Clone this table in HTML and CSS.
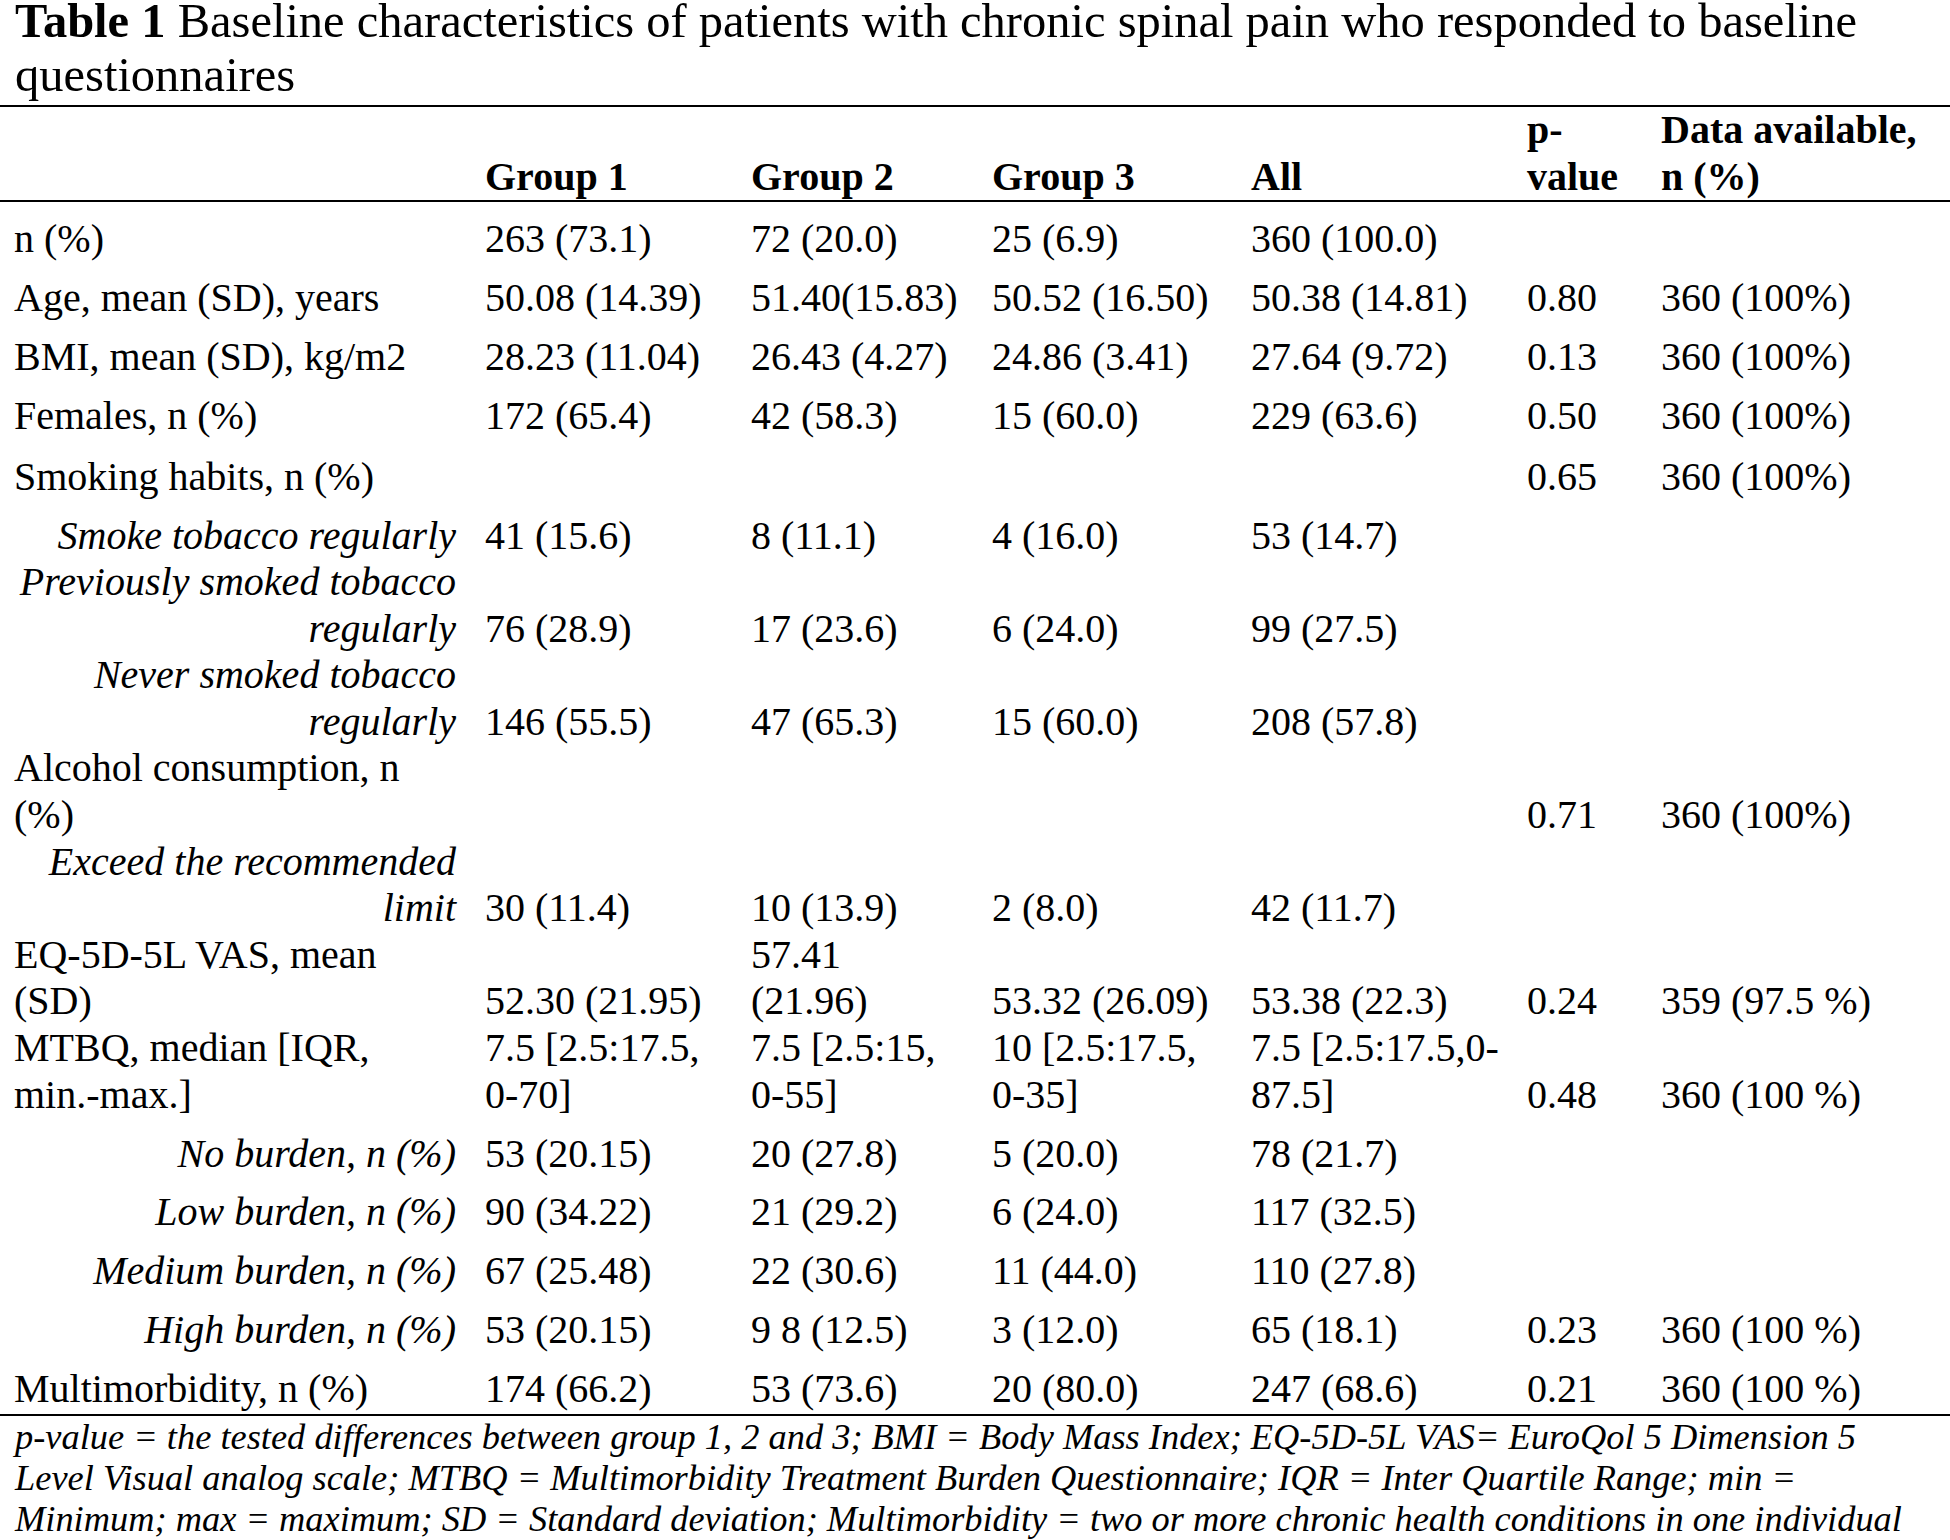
FILE: index.html
```html
<!DOCTYPE html>
<html lang="en">
<head>
<meta charset="utf-8">
<title>Table 1 Baseline characteristics</title>
<link rel="stylesheet" href="styles.css">
</head>
<body>
<div class="title"><b>Table 1</b> Baseline characteristics of patients with chronic spinal pain who responded to baseline questionnaires</div>
<table class="data">
  <colgroup>
    <col class="c-label"><col class="c-g1"><col class="c-g2"><col class="c-g3"><col class="c-all"><col class="c-p"><col class="c-avail">
  </colgroup>
  <thead>
    <tr><th></th><th>Group 1</th><th>Group 2</th><th>Group 3</th><th>All</th><th>p-<br>value</th><th>Data available,<br>n (%)</th></tr>
  </thead>
  <tbody>
    <tr class="first"><td>n (%)</td><td>263 (73.1)</td><td>72 (20.0)</td><td>25 (6.9)</td><td>360 (100.0)</td><td></td><td></td></tr>
    <tr class="pad"><td>Age, mean (SD), years</td><td>50.08 (14.39)</td><td>51.40(15.83)</td><td>50.52 (16.50)</td><td>50.38 (14.81)</td><td>0.80</td><td>360 (100%)</td></tr>
    <tr class="pad"><td>BMI, mean (SD), kg/m2</td><td>28.23 (11.04)</td><td>26.43 (4.27)</td><td>24.86 (3.41)</td><td>27.64 (9.72)</td><td>0.13</td><td>360 (100%)</td></tr>
    <tr class="pad"><td>Females, n (%)</td><td>172 (65.4)</td><td>42 (58.3)</td><td>15 (60.0)</td><td>229 (63.6)</td><td>0.50</td><td>360 (100%)</td></tr>
    <tr class="pad-wide"><td>Smoking habits, n (%)</td><td></td><td></td><td></td><td></td><td>0.65</td><td>360 (100%)</td></tr>
    <tr class="pad"><td class="sub">Smoke tobacco regularly</td><td>41 (15.6)</td><td>8 (11.1)</td><td>4 (16.0)</td><td>53 (14.7)</td><td></td><td></td></tr>
    <tr><td class="sub">Previously smoked tobacco<br>regularly</td><td>76 (28.9)</td><td>17 (23.6)</td><td>6 (24.0)</td><td>99 (27.5)</td><td></td><td></td></tr>
    <tr><td class="sub">Never smoked tobacco<br>regularly</td><td>146 (55.5)</td><td>47 (65.3)</td><td>15 (60.0)</td><td>208 (57.8)</td><td></td><td></td></tr>
    <tr><td>Alcohol consumption, n<br>(%)</td><td></td><td></td><td></td><td></td><td>0.71</td><td>360 (100%)</td></tr>
    <tr><td class="sub">Exceed the recommended<br>limit</td><td>30 (11.4)</td><td>10 (13.9)</td><td>2 (8.0)</td><td>42 (11.7)</td><td></td><td></td></tr>
    <tr><td>EQ-5D-5L VAS, mean<br>(SD)</td><td>52.30 (21.95)</td><td>57.41<br>(21.96)</td><td>53.32 (26.09)</td><td>53.38 (22.3)</td><td>0.24</td><td>359 (97.5 %)</td></tr>
    <tr><td>MTBQ, median [IQR,<br>min.-max.]</td><td>7.5 [2.5:17.5,<br>0-70]</td><td>7.5 [2.5:15,<br>0-55]</td><td>10 [2.5:17.5,<br>0-35]</td><td class="nowrap">7.5 [2.5:17.5,0-<br>87.5]</td><td>0.48</td><td>360 (100 %)</td></tr>
    <tr class="pad2"><td class="sub">No burden, n (%)</td><td>53 (20.15)</td><td>20 (27.8)</td><td>5 (20.0)</td><td>78 (21.7)</td><td></td><td></td></tr>
    <tr class="pad2"><td class="sub">Low burden, n (%)</td><td>90 (34.22)</td><td>21 (29.2)</td><td>6 (24.0)</td><td>117 (32.5)</td><td></td><td></td></tr>
    <tr class="pad2"><td class="sub">Medium burden, n (%)</td><td>67 (25.48)</td><td>22 (30.6)</td><td>11 (44.0)</td><td>110 (27.8)</td><td></td><td></td></tr>
    <tr class="pad2"><td class="sub">High burden, n (%)</td><td>53 (20.15)</td><td>9 8 (12.5)</td><td>3 (12.0)</td><td>65 (18.1)</td><td>0.23</td><td>360 (100 %)</td></tr>
    <tr class="pad2 last"><td>Multimorbidity, n (%)</td><td>174 (66.2)</td><td>53 (73.6)</td><td>20 (80.0)</td><td>247 (68.6)</td><td>0.21</td><td>360 (100 %)</td></tr>
  </tbody>
</table>
<p class="note">p-value = the tested differences between group 1, 2 and 3; BMI = Body Mass Index; EQ-5D-5L VAS= EuroQol 5 Dimension 5<br>Level Visual analog scale; MTBQ = Multimorbidity Treatment Burden Questionnaire; IQR = Inter Quartile Range; min =<br>Minimum; max = maximum; SD = Standard deviation; Multimorbidity = two or more chronic health conditions in one individual</p>
</body>
</html>
```

FILE: styles.css
```css
html, body {
  margin: 0;
  padding: 0;
  background: #fff;
}

body {
  width: 1950px;
  font-family: "Liberation Serif", "Times New Roman", serif;
  color: #000;
}

.title {
  font-size: 48.5px;
  line-height: 54px;
  margin-top: -6px;
  padding: 0 0 3px 15px;
}

.data {
  width: 1950px;
  table-layout: fixed;
  border-collapse: separate;
  border-spacing: 0;
  border-top: 2px solid #000;
  border-bottom: 2px solid #000;
  font-size: 40px;
  line-height: 46.6px;
}

.c-label { width: 470px; }
.c-g1 { width: 266px; }
.c-g2 { width: 241px; }
.c-g3 { width: 259px; }
.c-all { width: 276px; }
.c-p { width: 134px; }
.c-avail { width: 304px; }

.data th,
.data td {
  padding: 0 0 0 15px;
  vertical-align: bottom;
  text-align: left;
}

.data th {
  font-weight: bold;
  border-bottom: 2px solid #000;
}

.data td:first-child {
  padding-left: 14px;
  padding-right: 14px;
}

.data td.sub {
  font-style: italic;
  text-align: right;
}

.data td.nowrap {
  white-space: nowrap;
}

.data tr.first td { padding-top: 14.2px; }
.data tr.pad td { padding-top: 12.4px; }
.data tr.pad-wide td { padding-top: 13.6px; }
.data tr.pad2 td { padding-top: 12.3px; }
.data tr.last td { padding-bottom: 1px; }

.note {
  margin: 0;
  padding: 1.5px 0 0 15px;
  font-style: italic;
  font-size: 36.4px;
  line-height: 41px;
  white-space: nowrap;
}
```
